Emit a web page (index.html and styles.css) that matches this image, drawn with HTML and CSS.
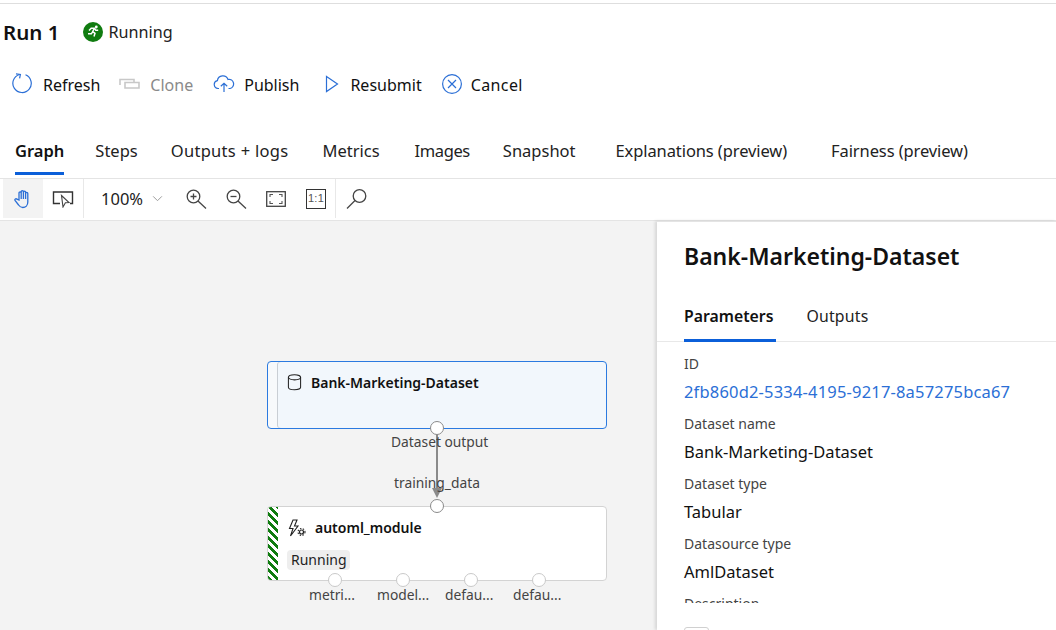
FILE: index.html
```html
<!DOCTYPE html>
<html lang="en">
<head>
<meta charset="utf-8">
<title>Run 1</title>
<link rel="stylesheet" href="styles.css">
</head>
<body>
<div class="page">
  <header class="title-row">
    <h1 class="run-title">Run 1</h1>
    <svg class="status-icon" viewBox="0 0 20 20" width="20" height="20"><circle cx="10" cy="10" r="10" fill="#107c10"/><path d="M6 8.500l2.200-2.300h3.300l-1.800 3.300 2.300 1.800-1 3.200M9.700 9.500l-1.300 2.300H5M11.500 6.200l1.300 2.100h2.400" fill="none" stroke="#fff" stroke-width="1.500"/><circle cx="13.300" cy="5" r="1.400" fill="#fff"/></svg>
    <span class="status-text">Running</span>
  </header>

  <nav class="commands">
    <button class="cmd cmd-refresh"><svg viewBox="0 0 22 22" width="22" height="22"><path d="M13.500 1.800A9.200 9.200 0 1 1 7.500 1.500" fill="none" stroke="#2b6fd6" stroke-width="1.200"/><path d="M4 .8l4.400.6-.8 4" fill="none" stroke="#2b6fd6" stroke-width="1.200"/></svg><span>Refresh</span></button>
    <button class="cmd cmd-clone disabled"><svg viewBox="0 0 22 16" width="22" height="16"><path d="M1 9V3.500h14V6M6 6.500h14V12H6z" fill="none" stroke="#c8c8c8" stroke-width="1.600"/></svg><span>Clone</span></button>
    <button class="cmd cmd-publish"><svg viewBox="0 0 22 18" width="22" height="18"><path d="M6 13.500H5a4 4 0 0 1-.6-7.900A5.500 5.500 0 0 1 15 4.500a4.500 4.500 0 0 1 2 9h-1.500M11 17V8.500M7.800 11.300L11 8.300l3.200 3" fill="none" stroke="#2b6fd6" stroke-width="1.200"/></svg><span>Publish</span></button>
    <button class="cmd cmd-resubmit"><svg viewBox="0 0 14 18" width="14" height="18"><path d="M1.500 1.500L12.500 9 1.500 16.500z" fill="none" stroke="#2b6fd6" stroke-width="1.200"/></svg><span>Resubmit</span></button>
    <button class="cmd cmd-cancel"><svg viewBox="0 0 20 20" width="20" height="20"><circle cx="10" cy="10" r="9.400" fill="none" stroke="#2b6fd6" stroke-width="1.200"/><path d="M6 6l8 8M14 6l-8 8" stroke="#2b6fd6" stroke-width="1.200"/></svg><span>Cancel</span></button>
  </nav>

  <nav class="tabs">
    <a class="tab active tab-graph">Graph</a>
    <a class="tab tab-steps">Steps</a>
    <a class="tab tab-outputs">Outputs + logs</a>
    <a class="tab tab-metrics">Metrics</a>
    <a class="tab tab-images">Images</a>
    <a class="tab tab-snapshot">Snapshot</a>
    <a class="tab tab-expl">Explanations (preview)</a>
    <a class="tab tab-fair">Fairness (preview)</a>
  </nav>

  <div class="graph-toolbar">
    <div class="tool-group tool-group-modes">
      <button class="tool tool-active"><svg viewBox="0 0 20 20" width="20" height="20"><path d="M6 11V4a1.100 1.100 0 0 1 2.200 0V2.700a1.100 1.100 0 0 1 2.200 0v.6a1.100 1.100 0 0 1 2.200 0v1.200a1.100 1.100 0 0 1 2.200 0V13c0 3.200-2.200 5.500-5 5.500-2.100 0-3.200-1-4.200-2.500L2 11.500c-.7-1.300.9-2.400 2-1.300z M8.200 4V10M10.400 3.300V10M12.600 4.500V10" fill="none" stroke="#2b6fd6" stroke-width="1.300"/></svg></button>
      <button class="tool"><svg viewBox="0 0 22 18" width="22" height="18"><path d="M8 13.500H1.500V2h19v11.500H18" fill="none" stroke="#333" stroke-width="1.400"/><path d="M9.500 5.500l7.500 7-3.600.3L11 17z" fill="#fff" stroke="#444" stroke-width="1.100"/></svg></button>
    </div>
    <div class="tool-group tool-group-zoom">
      <span class="zoom-value">100%</span>
      <svg class="chev" viewBox="0 0 12 8" width="11" height="7"><path d="M1 1.500l5 5 5-5" fill="none" stroke="#999" stroke-width="1.100"/></svg>
      <button class="tool-icon"><svg viewBox="0 0 22 22" width="22" height="22"><circle cx="8.500" cy="8.500" r="6.300" fill="none" stroke="#444" stroke-width="1.300"/><path d="M13 13l8 7.500" stroke="#444" stroke-width="1.300"/><path d="M5.500 8.500h6M8.500 5.500v6" stroke="#444" stroke-width="1.300"/></svg></button>
      <button class="tool-icon"><svg viewBox="0 0 22 22" width="22" height="22"><circle cx="8.500" cy="8.500" r="6.300" fill="none" stroke="#444" stroke-width="1.300"/><path d="M13 13l8 7.500" stroke="#444" stroke-width="1.300"/><path d="M5.500 8.500h6" stroke="#444" stroke-width="1.300"/></svg></button>
      <button class="tool-icon"><svg viewBox="0 0 20 16" width="20" height="16"><rect x=".7" y=".7" width="18.600" height="14.600" fill="none" stroke="#444" stroke-width="1.300"/><path d="M4 6V3.500h3M13 3.500h3V6M16 10v2.500h-3M7 12.500H4V10" fill="none" stroke="#555" stroke-width="1.100"/></svg></button>
      <button class="tool-icon tool-icon-last"><span class="one-to-one">1:1</span></button>
    </div>
    <div class="tool-group tool-group-search">
      <button class="tool-icon"><svg viewBox="0 0 22 22" width="22" height="22"><circle cx="13.500" cy="8" r="6.300" fill="none" stroke="#444" stroke-width="1.300"/><path d="M9 12.500l-8 8" stroke="#444" stroke-width="1.300"/></svg></button>
    </div>
  </div>

  <main class="workspace">
    <section class="canvas">
      <svg class="edge" viewBox="0 0 10 70" width="10" height="70"><path d="M5 0v56" stroke="#8a8a8a" stroke-width="2"/><path d="M0 54h10l-5 10z" fill="#8a8a8a"/></svg>

      <div class="node node-dataset">
        <svg class="node-icon" viewBox="0 0 16 18" width="15" height="17"><ellipse cx="8" cy="3.500" rx="6.500" ry="2.700" fill="none" stroke="#222" stroke-width="1.100"/><path d="M1.500 3.500v10.500c0 1.500 3 2.700 6.500 2.700s6.500-1.200 6.500-2.700V3.500" fill="none" stroke="#222" stroke-width="1.100"/></svg>
        <span class="node-title">Bank-Marketing-Dataset</span>
      </div>
      <span class="port port-out-main"></span>
      <span class="port-label label-output">Dataset output</span>
      <span class="port-label label-training">training_data</span>

      <div class="node node-automl">
        <svg class="node-icon-automl" viewBox="0 0 18 18" width="18" height="18"><path d="M9 1H5L1.500 9.500H5L2.500 17 10 7H6.500z" fill="none" stroke="#222" stroke-width="1.100"/><circle cx="13.500" cy="13" r="2" fill="none" stroke="#222" stroke-width="1.200"/><circle cx="13.500" cy="13" r="3.500" fill="none" stroke="#222" stroke-width="1.100" stroke-dasharray="1.400 1.500"/></svg>
        <span class="node-title node-title-automl">automl_module</span>
        <span class="node-badge">Running</span>
      </div>
      <span class="port port-in-main"></span>
      <span class="port port-a"></span><span class="port port-b"></span><span class="port port-c"></span><span class="port port-d"></span>
      <span class="port-label label-a">metri...</span>
      <span class="port-label label-b">model...</span>
      <span class="port-label label-c">defau...</span>
      <span class="port-label label-d">defau...</span>
    </section>

    <aside class="panel">
      <h2 class="panel-title">Bank-Marketing-Dataset</h2>
      <div class="panel-tabs">
        <a class="panel-tab active">Parameters</a>
        <a class="panel-tab panel-tab-outputs">Outputs</a>
      </div>
      <div class="fields">
        <div class="field"><div class="field-label">ID</div><a class="field-value link">2fb860d2-5334-4195-9217-8a57275bca67</a></div>
        <div class="field"><div class="field-label">Dataset name</div><div class="field-value">Bank-Marketing-Dataset</div></div>
        <div class="field"><div class="field-label">Dataset type</div><div class="field-value">Tabular</div></div>
        <div class="field"><div class="field-label">Datasource type</div><div class="field-value">AmlDataset</div></div>
        <div class="field"><div class="field-label">Description</div></div>
      </div>
      <div class="panel-foot"><span class="foot-box"></span></div>
    </aside>
  </main>
</div>
</body>
</html>
```

FILE: styles.css
```css
* { box-sizing: border-box; }
html, body { margin: 0; padding: 0; }
body { background: #fff; color: #111; font-family: "Noto Sans", "Open Sans", sans-serif; overflow: hidden; }
.page { width: 1056px; height: 630px; display: flex; flex-direction: column; overflow: hidden; border-top: 3px solid #fff; }
.page::before { content: ""; display: block; height: 1px; background: #dedede; flex: none; }

.title-row { display: flex; align-items: center; height: 42px; margin-top: 7px; padding-left: 3px; flex: none; }
.run-title { margin: 0 24px 0 0; font-size: 20.500px; font-weight: 600; line-height: 28px; }
.status-icon { margin-right: 5px; }
.status-text { font-size: 16.200px; color: #222; }

.commands { display: flex; align-items: center; height: 40px; margin-top: 11px; padding-left: 12px; flex: none; }
.cmd { display: flex; align-items: center; gap: 9px; border: 0; background: none; padding: 0; font: inherit; font-size: 16px; color: #111; }
.cmd span { padding-top: 2px; }
.cmd-refresh { margin-right: 19px; }
.cmd-clone { margin-right: 20px; }
.cmd-publish { margin-right: 26px; }
.cmd-resubmit { margin-right: 20px; gap: 11px; }
.cmd-cancel { letter-spacing: .4px; }
.disabled { color: #8a8a8a; }

.tabs { display: flex; height: 44px; margin-top: 27px; padding-left: 15px; flex: none; }
.tab { display: flex; align-items: center; font-size: 16.500px; color: #222; height: 100%; padding-bottom: 5px; white-space: nowrap; }
.tab.active { font-weight: 600; color: #111; border-bottom: 3px solid #0b5fd9; padding-bottom: 2px; }
.tab-graph { margin-right: 31px; }
.tab-steps { margin-right: 33px; }
.tab-outputs { margin-right: 34px; letter-spacing: .3px; }
.tab-metrics { margin-right: 35px; }
.tab-images { margin-right: 33px; letter-spacing: -.4px; }
.tab-snapshot { margin-right: 40px; }
.tab-expl { margin-right: 44px; letter-spacing: -.1px; }
.tab-fair { letter-spacing: -.1px; }

.graph-toolbar { display: flex; align-items: center; height: 43px; margin-top: 3px; padding: 0 0 2px 3px; border-top: 1px solid #e4e4e4; border-bottom: 1px solid #e4e4e4; flex: none; }
.tool-group { display: flex; align-items: center; height: 39px; border-right: 1px solid #e8e8e8; flex: none; }
.tool-group-modes { width: 81px; }
.tool-group-zoom { width: 252px; padding-left: 17px; }
.tool-group-search { border-right: 0; padding-left: 10px; }
.tool { width: 40px; height: 39px; display: flex; align-items: center; justify-content: center; border: 0; background: none; padding: 0; }
.tool-active { background: #f3f3f3; }
.zoom-value { font-size: 16.500px; color: #222; width: 51px; flex: none; }
.chev { margin-right: 22px; flex: none; }
.tool-icon { border: 0; background: none; padding: 0; display: flex; align-items: center; justify-content: center; width: 22px; height: 22px; margin-right: 18px; flex: none; }
.tool-icon-last { margin-right: 0; }
.one-to-one { width: 20px; height: 20px; border: 1.300px solid #333; font-family: "Liberation Sans", sans-serif; font-size: 11px; line-height: 17px; color: #555; text-align: center; letter-spacing: .3px; }

.workspace { flex: 1; display: flex; min-height: 0; }
.canvas { flex: 1; position: relative; background: #f3f3f3; min-width: 0; }

.node { position: absolute; border-radius: 4px; background: #fff; display: flex; }
.node-dataset { left: 267px; top: 140px; width: 340px; height: 68px; background: #f2f7fc; border: 1px solid #2b7ae0; box-shadow: inset 9px 0 0 #f7f9fb, inset 10px 0 0 #c9ced4; padding: 11px 0 0 19px; }
.node-icon { margin-right: 9px; flex: none; margin-top: 1px; }
.node-title { font-size: 14px; font-weight: 600; color: #111; line-height: 20px; white-space: nowrap; }
.node-automl { left: 267px; top: 285px; width: 340px; height: 75px; border: 1px solid #d3d3d3; overflow: hidden; padding: 12px 0 0 20px; }
.node-automl::before { content: ""; position: absolute; left: 0; top: 0; bottom: 0; width: 10px; background: repeating-linear-gradient(45deg, #107c10 0 3px, #fff 3px 5.700px); }
.node-icon-automl { margin-right: 9px; flex: none; }
.node-title-automl { margin-top: -1px; }
.node-badge { position: absolute; left: 19px; top: 43px; height: 20px; padding: 0 3px 0 4px; border-radius: 4px; background: #eeeeee; font-size: 14px; line-height: 20px; color: #222; }

.edge { position: absolute; left: 432px; top: 213px; }
.port { position: absolute; width: 14px; height: 14px; border-radius: 50%; background: #fff; border: 1.500px solid #c9c9c9; }
.port-out-main { left: 430px; top: 200px; border-color: #8a8a8a; }
.port-in-main { left: 430px; top: 278px; border-color: #8a8a8a; }
.port-a { left: 328px; top: 352px; }
.port-b { left: 396px; top: 352px; }
.port-c { left: 464px; top: 352px; }
.port-d { left: 532px; top: 352px; }
.port-label { position: absolute; font-size: 13.800px; line-height: 18px; color: #444; white-space: nowrap; }
.label-output { left: 391px; top: 212px; }
.label-training { left: 394px; top: 253px; }
.label-a { left: 309px; top: 365px; }
.label-b { left: 377px; top: 365px; }
.label-c { left: 445px; top: 365px; }
.label-d { left: 513px; top: 365px; }

.panel { width: 399px; flex: none; background: #fff; box-shadow: -2px 0 3px rgba(0,0,0,.12); display: flex; flex-direction: column; position: relative; border-top: 1px solid #e4e4e4; }
.panel-title { margin: 18px 0 0 27px; font-size: 23px; font-weight: 600; line-height: 32px; color: #111; }
.panel-tabs { display: flex; margin-top: 32px; height: 38px; padding-left: 27px; border-bottom: 1px solid #e8e8e8; flex: none; }
.panel-tab { font-size: 15.800px; line-height: 24px; color: #222; margin-right: 30px; }
.panel-tab.active { font-weight: 600; color: #111; border-bottom: 3px solid #0b5fd9; height: 38px; padding-right: 3px; }
.panel-tab-outputs { letter-spacing: .2px; }
.fields { height: 261px; overflow: hidden; padding: 12px 0 0 27px; flex: none; }
.field { height: 60px; }
.field-label { font-size: 14px; line-height: 20px; color: #444; }
.field-value { display: block; font-size: 16.500px; line-height: 24px; margin-top: 6px; color: #111; }
.link { color: #2b6fd6; letter-spacing: .18px; }
.panel-foot { padding: 24px 0 0 27px; }
.foot-box { display: block; width: 25px; height: 10px; border: 1px solid #d0d0d0; border-radius: 3px; }
```
